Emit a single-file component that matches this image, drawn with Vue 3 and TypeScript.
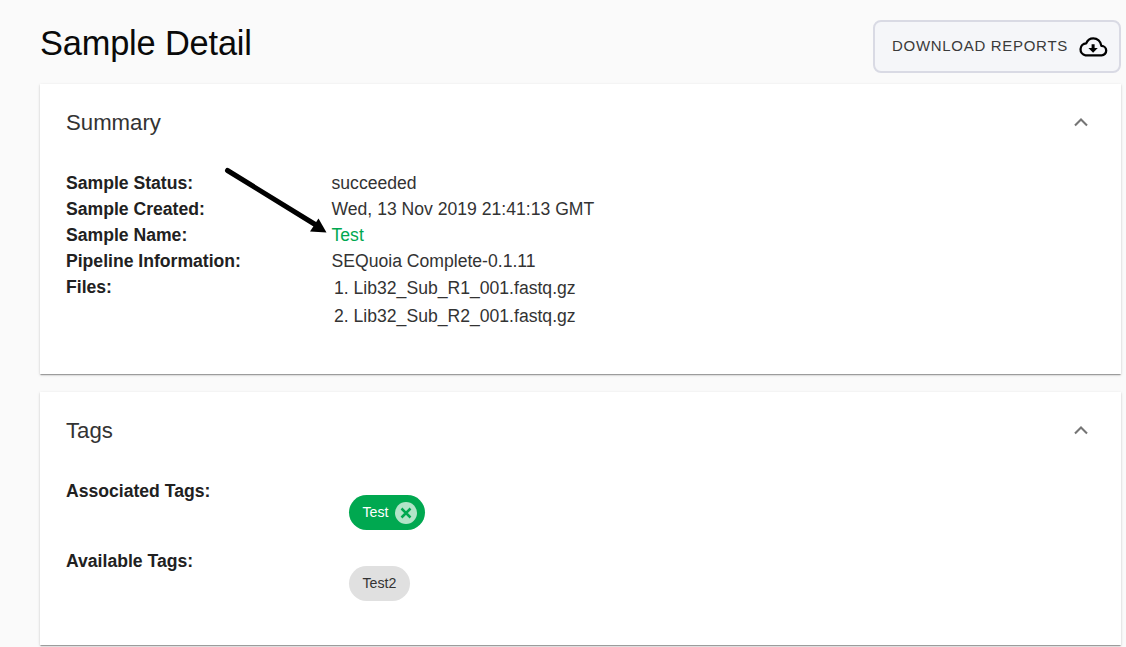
<script setup lang="ts">
interface DetailRow {
  label: string
  value: string
  link?: boolean
}

const rows: DetailRow[] = [
  { label: 'Sample Status:', value: 'succeeded' },
  { label: 'Sample Created:', value: 'Wed, 13 Nov 2019 21:41:13 GMT' },
  { label: 'Sample Name:', value: 'Test', link: true },
  { label: 'Pipeline Information:', value: 'SEQuoia Complete-0.1.11' },
]
const files: string[] = ['Lib32_Sub_R1_001.fastq.gz', 'Lib32_Sub_R2_001.fastq.gz']
</script>

<template>
  <main class="page">
    <header class="top">
      <h1>Sample Detail</h1>
      <button class="download" type="button">
        <span>DOWNLOAD REPORTS</span>
        <svg class="cloud" width="30" height="22" viewBox="0 0 30 22">
          <path d="M7.5 19.3H23.6A4.6 4.6 0 0 0 23.4 9.9C22.6 5.2 19.3 2.4 15.3 2.4C12 2.4 9.4 4.3 8.2 7.4A6 6 0 0 0 7.5 19.3Z" fill="none" stroke="#000" stroke-width="2.3" stroke-linejoin="round" />
          <path d="M13.6 8.2h3v3.9h3.2L15.1 16.8L10.4 12.1h3.2z" fill="#000" />
        </svg>
      </button>
    </header>

    <section class="card summary">
      <div class="card-head">
        <h2>Summary</h2>
        <svg class="chevron" width="14" height="9" viewBox="0 0 14 9"><path d="M1 7.5L7 1.5L13 7.5" /></svg>
      </div>
      <dl>
        <div v-for="row in rows" :key="row.label" class="row">
          <dt>{{ row.label }}</dt>
          <dd :class="{ link: row.link }">{{ row.value }}</dd>
        </div>
        <div class="row">
          <dt>Files:</dt>
          <dd>
            <div v-for="(file, i) in files" :key="file" class="file">{{ i + 1 }}. {{ file }}</div>
          </dd>
        </div>
      </dl>
      <svg class="arrow" width="110" height="72" viewBox="0 0 110 72">
        <path d="M7.5 6.5L96 61" stroke="#000" stroke-width="5" stroke-linecap="round" />
        <path d="M106.5 68.5L90 67.5L98.5 54.5Z" fill="#000" />
      </svg>
    </section>

    <section class="card tags">
      <div class="card-head">
        <h2>Tags</h2>
        <svg class="chevron" width="14" height="9" viewBox="0 0 14 9"><path d="M1 7.5L7 1.5L13 7.5" /></svg>
      </div>
      <dl>
        <div class="tag-row">
          <dt>Associated Tags:</dt>
          <dd>
            <span class="chip active">
              <span class="chip-text">Test</span>
              <svg width="22" height="22" viewBox="0 0 22 22">
                <circle cx="11" cy="11" r="11" fill="#b2e4c8" />
                <path d="M6.5 6.5L15.5 15.5M15.5 6.5L6.5 15.5" stroke="#00a850" stroke-width="2.5" />
              </svg>
            </span>
          </dd>
        </div>
        <div class="tag-row">
          <dt>Available Tags:</dt>
          <dd class="lower"><span class="chip"><span class="chip-text">Test2</span></span></dd>
        </div>
      </dl>
    </section>
  </main>
</template>

<style>
body {
  background: #fafafa;
}
</style>

<style scoped>
.page {
  box-sizing: border-box;
  height: 647px;
  overflow: hidden;
  padding: 20px 5px 0 40px;
  background: #fafafa;
  color: #212121;
  font-family: "Liberation Sans", Arial, sans-serif;
  font-size: 17.6px;
}
.top {
  display: flex;
  justify-content: space-between;
  height: 64px;
}
h1 {
  margin: 0;
  color: #0a0a0a;
  font-size: 34.4px;
  letter-spacing: -0.18px;
  font-weight: 400;
  line-height: 46px;
}
.download {
  box-sizing: border-box;
  display: flex;
  align-items: center;
  justify-content: space-between;
  width: 248px;
  height: 53px;
  padding: 0 11px 0 17px;
  border: 2px solid #d9dae4;
  border-radius: 8px;
  background: #f5f6f9;
  color: #3a3a3a;
  font-family: inherit;
  font-size: 15px;
  letter-spacing: 0.7px;
}
.download span {
  padding-bottom: 2px;
}
.card {
  position: relative;
  box-sizing: border-box;
  width: 1081px;
  padding: 0 33px 0 26px;
  background: #fff;
  box-shadow: 0 2px 1px -1px rgba(0, 0, 0, 0.2), 0 1px 1px rgba(0, 0, 0, 0.14), 0 1px 3px rgba(0, 0, 0, 0.14);
}
.summary {
  height: 290px;
  margin-bottom: 18px;
}
.tags {
  height: 253px;
}
.card-head {
  display: flex;
  align-items: center;
  justify-content: space-between;
  height: 77px;
}
h2 {
  margin: 0;
  color: #333;
  font-size: 22.2px;
  font-weight: 400;
}
.chevron {
  margin-bottom: 1px;
}
.chevron path {
  fill: none;
  stroke: #757575;
  stroke-width: 2.1;
}
dl {
  margin: 9px 0 0;
}
.row,
.tag-row {
  display: grid;
  grid-template-columns: 265.5px 1fr;
  line-height: 26px;
}
dt {
  font-weight: 700;
}
dd {
  margin: 0;
  color: #333;
}
.link {
  color: #00a850;
}
.file {
  padding-left: 2.5px;
  line-height: 28px;
}
.arrow {
  position: absolute;
  left: 180px;
  top: 80px;
}
.tag-row {
  height: 70px;
}
.tag-row dd {
  padding: 17px 0 0 17.5px;
}
.tag-row .lower {
  padding-top: 18px;
}
.chip {
  box-sizing: border-box;
  display: inline-flex;
  align-items: center;
  gap: 6px;
  height: 35px;
  padding: 0 13.5px;
  border-radius: 18px;
  background: #e0e0e0;
  color: #333;
  font-size: 14.2px;
  line-height: 20px;
}
.chip-text {
  padding-bottom: 1px;
}
.chip.active {
  padding-right: 8px;
  background: #00a850;
  color: #fff;
}
</style>
